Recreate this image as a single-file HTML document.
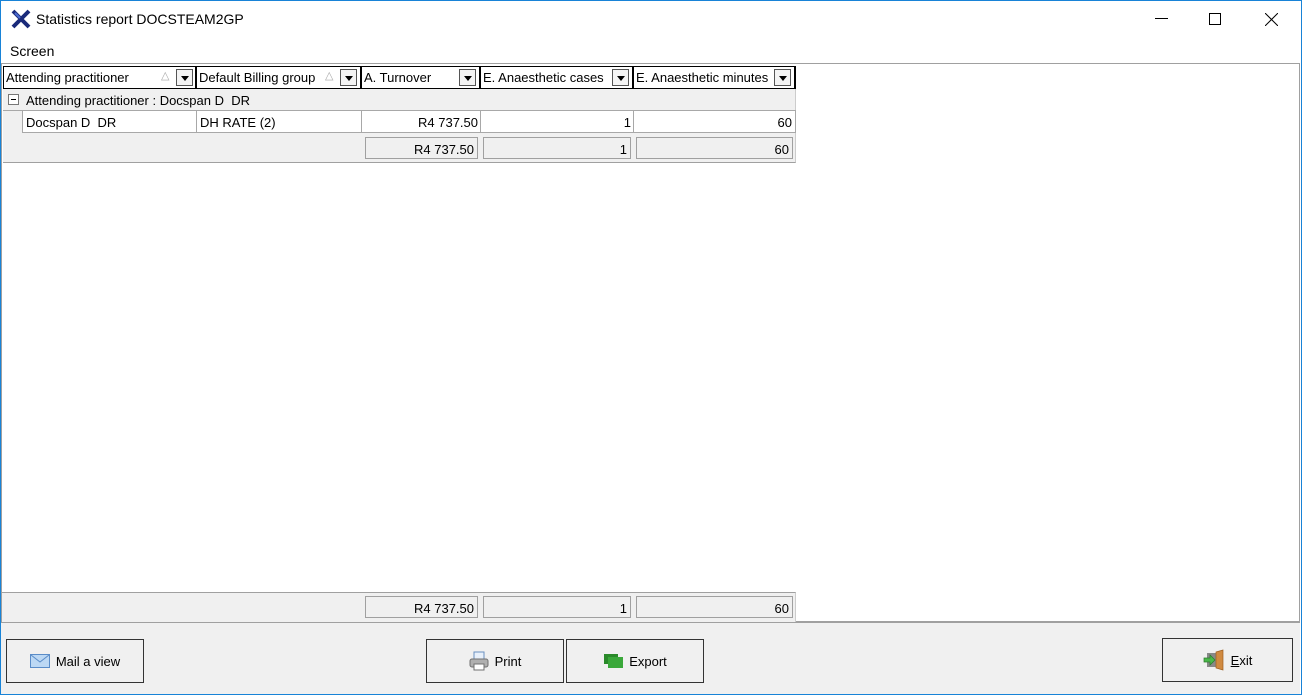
<!DOCTYPE html>
<html><head><style>
*{margin:0;padding:0;box-sizing:border-box}
body{width:1302px;height:695px;position:relative;background:#fff;font-family:"Liberation Sans",sans-serif;font-size:13px;color:#000;overflow:hidden}
.a{position:absolute}
.win{left:0;top:0;width:1302px;height:695px;border:1px solid #1883d7}
.t{white-space:nowrap;line-height:1}
.hd{top:66px;height:23px;border:1px solid #000;border-right-width:2px;background:#fff;padding:4px 0 0 2px}
.dd{position:absolute;top:2px;width:17px;height:17px;border:1px solid #555;background:#f4f4f4}
.dd:after{content:"";position:absolute;left:4px;top:6px;border-left:4px solid transparent;border-right:4px solid transparent;border-top:5px solid #000}
.cell{height:23px;background:#fff;border-left:1px solid #a8a8a8;border-top:1px solid #a8a8a8;border-bottom:1px solid #a8a8a8;padding:5px 3px 0 3px}
.sum{height:22px;border:1px solid #a0a0a0;background:#f0f0f0;text-align:right;padding:5px 3px 0 0}
.btn{height:44px;border:1px solid #333;background:#f0f0f0;display:flex;align-items:center;justify-content:center;font-size:13px}
</style></head><body>
<div class="a win"></div>
<svg class="a" style="left:11px;top:9px" width="20" height="20" viewBox="0 0 20 20"><path d="M2 2 L18 18 M18 2 L2 18" stroke="#1a2a7a" stroke-width="4"/><path d="M4 4 L9 9" stroke="#4a6ad0" stroke-width="2"/></svg>
<div class="a t" style="left:36px;top:12px;font-size:14px">Statistics report DOCSTEAM2GP</div>
<div class="a" style="left:1155px;top:18px;width:13px;height:1px;background:#000"></div>
<div class="a" style="left:1209px;top:13px;width:12px;height:12px;border:1px solid #000"></div>
<svg class="a" style="left:1265px;top:13px" width="13" height="13"><path d="M0 0L13 13M13 0L0 13" stroke="#000" stroke-width="1"/></svg>
<div class="a t" style="left:10px;top:44px;font-size:14px">Screen</div>
<div class="a" style="left:1px;top:63px;width:1299px;height:560px;border:1px solid #a0a0a0;border-bottom:2px solid #a0a0a0;background:#fff"></div>
<div class="a" style="left:1px;top:623px;width:1299px;height:71px;background:#f0f0f0"></div>

<div class="a hd t" style="left:3px;width:194px">Attending practitioner<span class="a" style="left:157px;top:4px;color:#aaa;font-size:11px">△</span><div class="dd" style="left:172px"></div></div>
<div class="a hd t" style="left:196px;width:166px">Default Billing group<span class="a" style="left:128px;top:4px;color:#aaa;font-size:11px">△</span><div class="dd" style="left:143px"></div></div>
<div class="a hd t" style="left:361px;width:120px">A. Turnover<div class="dd" style="left:97px"></div></div>
<div class="a hd t" style="left:480px;width:154px">E. Anaesthetic cases<div class="dd" style="left:131px"></div></div>
<div class="a hd t" style="left:633px;width:163px">E. Anaesthetic minutes<div class="dd" style="left:140px"></div></div>

<div class="a" style="left:3px;top:89px;width:793px;height:74px;background:#f0f0f0;border-right:1px solid #ccc;border-bottom:1px solid #a0a0a0"></div>
<div class="a" style="left:8px;top:94px;width:11px;height:11px;border:1px solid #777;background:#fff"><div class="a" style="left:2px;top:4px;width:5px;height:1px;background:#000"></div></div>
<div class="a t" style="left:26px;top:94px">Attending practitioner : Docspan D&nbsp; DR</div>
<div class="a" style="left:3px;top:110px;width:793px;height:1px;background:#a8a8a8"></div>
<div class="a cell t" style="left:22px;top:110px;width:175px">Docspan D&nbsp; DR</div>
<div class="a cell t" style="left:196px;top:110px;width:166px">DH RATE (2)</div>
<div class="a cell t" style="left:361px;top:110px;width:120px;text-align:right">R4 737.50</div>
<div class="a cell t" style="left:480px;top:110px;width:154px;text-align:right">1</div>
<div class="a cell t" style="left:633px;top:110px;width:163px;text-align:right;border-right:1px solid #a8a8a8">60</div>
<div class="a sum t" style="left:365px;top:137px;width:113px">R4 737.50</div>
<div class="a sum t" style="left:483px;top:137px;width:148px">1</div>
<div class="a sum t" style="left:636px;top:137px;width:157px">60</div>

<div class="a" style="left:2px;top:592px;width:794px;height:30px;background:#f0f0f0;border-top:1px solid #a0a0a0;border-right:1px solid #ccc"></div>
<div class="a sum t" style="left:365px;top:596px;width:113px">R4 737.50</div>
<div class="a sum t" style="left:483px;top:596px;width:148px">1</div>
<div class="a sum t" style="left:636px;top:596px;width:157px">60</div>

<div class="a btn" style="left:6px;top:639px;width:138px"><svg width="20" height="14" style="margin-right:6px"><rect x="0.5" y="0.5" width="19" height="13" fill="#bcd8f4" stroke="#5a8cc8"/><path d="M1 1L10 8L19 1" fill="none" stroke="#5a8cc8"/></svg>Mail a view</div>
<div class="a btn" style="left:426px;top:639px;width:138px"><svg width="20" height="20" style="margin-right:6px"><rect x="5" y="1" width="10" height="8" fill="#e8f0fa" stroke="#6a90c0"/><rect x="1" y="8" width="18" height="8" rx="2" fill="#b0b0b0" stroke="#707070"/><rect x="5" y="13" width="10" height="6" fill="#fff" stroke="#707070"/></svg>Print</div>
<div class="a btn" style="left:566px;top:639px;width:138px"><svg width="22" height="16" style="margin-right:4px"><rect x="1" y="1" width="14" height="10" fill="#2a8a2a"/><rect x="5" y="4" width="15" height="11" fill="#3aa83a"/></svg>Export</div>
<div class="a btn" style="left:1162px;top:638px;width:131px"><svg width="24" height="22" style="margin-right:4px"><rect x="4" y="4" width="10" height="14" fill="#888"/><path d="M1 9h6v-3l5 5-5 5v-3H1z" fill="#4ab84a" stroke="#2a7a2a" stroke-width=".7"/><path d="M13 3l7-2v20l-7-2z" fill="#d08a40" stroke="#a06020" stroke-width=".7"/></svg><span><u>E</u>xit</span></div>
</body></html>
